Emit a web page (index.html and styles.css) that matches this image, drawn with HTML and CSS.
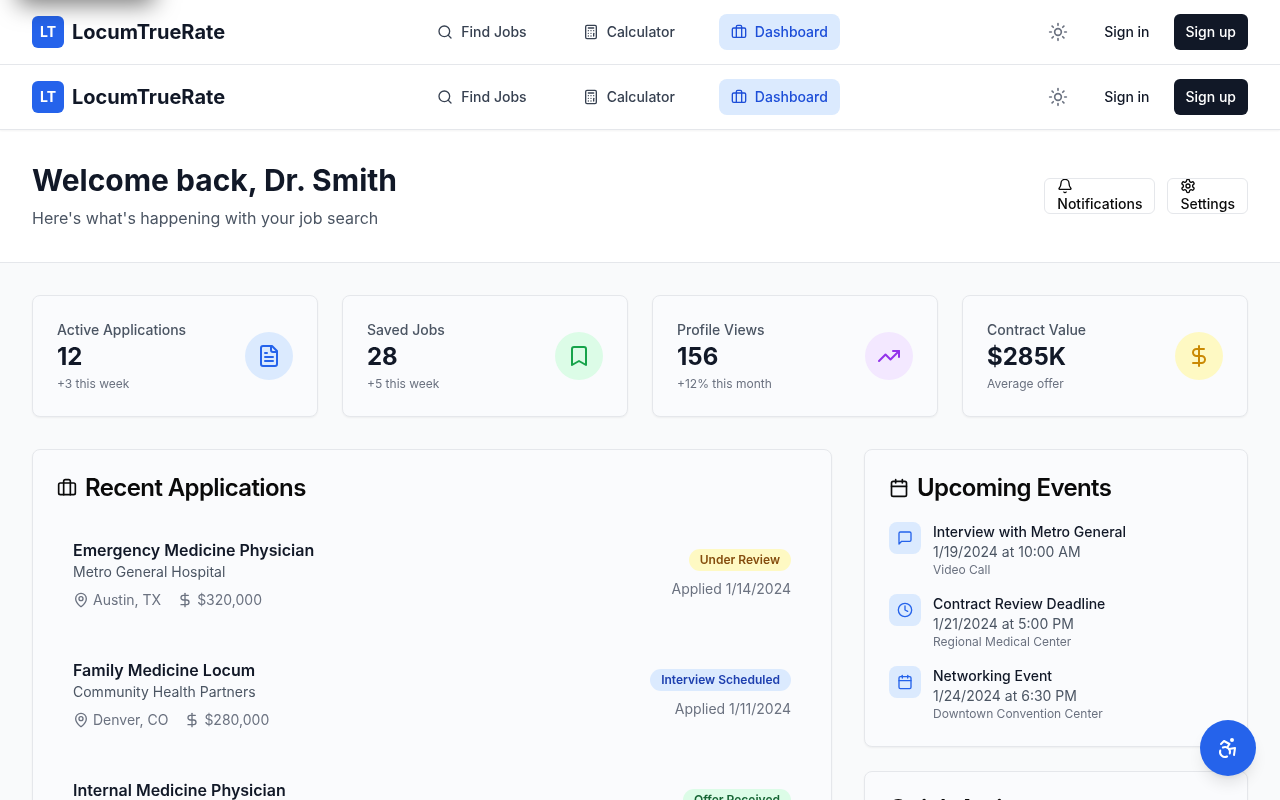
FILE: index.html
```html
<!DOCTYPE html>
<html lang="en">
<head>
<meta charset="utf-8">
<title>LocumTrueRate Dashboard</title>
<link rel="stylesheet" href="styles.css">
</head>
<body>
<svg class="sprite" width="0" height="0" aria-hidden="true">
  <defs>
    <symbol id="i-search" viewBox="0 0 24 24"><path d="m21 21-4.34-4.34"/><circle cx="11" cy="11" r="8"/></symbol>
    <symbol id="i-calc" viewBox="0 0 24 24"><rect width="16" height="20" x="4" y="2" rx="2"/><line x1="8" x2="16" y1="6" y2="6"/><line x1="16" x2="16" y1="14" y2="18"/><path d="M16 10h.01"/><path d="M12 10h.01"/><path d="M8 10h.01"/><path d="M12 14h.01"/><path d="M8 14h.01"/><path d="M12 18h.01"/><path d="M8 18h.01"/></symbol>
    <symbol id="i-brief" viewBox="0 0 24 24"><path d="M16 20V4a2 2 0 0 0-2-2h-4a2 2 0 0 0-2 2v16"/><rect width="20" height="14" x="2" y="6" rx="2"/></symbol>
    <symbol id="i-sun" viewBox="0 0 24 24"><circle cx="12" cy="12" r="4"/><path d="M12 2v2"/><path d="M12 20v2"/><path d="m4.93 4.93 1.41 1.41"/><path d="m17.66 17.66 1.41 1.41"/><path d="M2 12h2"/><path d="M20 12h2"/><path d="m6.34 17.66-1.41 1.41"/><path d="m19.07 4.93-1.41 1.41"/></symbol>
    <symbol id="i-bell" viewBox="0 0 24 24"><path d="M10.268 21a2 2 0 0 0 3.464 0"/><path d="M3.262 15.326A1 1 0 0 0 4 17h16a1 1 0 0 0 .74-1.673C19.41 13.956 18 12.499 18 8A6 6 0 0 0 6 8c0 4.499-1.411 5.956-2.738 7.326"/></symbol>
    <symbol id="i-gear" viewBox="0 0 24 24"><path d="M12.22 2h-.44a2 2 0 0 0-2 2v.18a2 2 0 0 1-1 1.73l-.43.25a2 2 0 0 1-2 0l-.15-.08a2 2 0 0 0-2.73.73l-.22.38a2 2 0 0 0 .73 2.73l.15.1a2 2 0 0 1 1 1.72v.51a2 2 0 0 1-1 1.74l-.15.09a2 2 0 0 0-.73 2.73l.22.38a2 2 0 0 0 2.73.73l.15-.08a2 2 0 0 1 2 0l.43.25a2 2 0 0 1 1 1.73V20a2 2 0 0 0 2 2h.44a2 2 0 0 0 2-2v-.18a2 2 0 0 1 1-1.73l.43-.25a2 2 0 0 1 2 0l.15.08a2 2 0 0 0 2.73-.73l.22-.39a2 2 0 0 0-.73-2.73l-.15-.08a2 2 0 0 1-1-1.74v-.5a2 2 0 0 1 1-1.74l.15-.09a2 2 0 0 0 .73-2.73l-.22-.38a2 2 0 0 0-2.73-.73l-.15.08a2 2 0 0 1-2 0l-.43-.25a2 2 0 0 1-1-1.73V4a2 2 0 0 0-2-2z"/><circle cx="12" cy="12" r="3"/></symbol>
    <symbol id="i-file" viewBox="0 0 24 24"><path d="M15 2H6a2 2 0 0 0-2 2v16a2 2 0 0 0 2 2h12a2 2 0 0 0 2-2V7Z"/><path d="M14 2v4a2 2 0 0 0 2 2h4"/><path d="M10 9H8"/><path d="M16 13H8"/><path d="M16 17H8"/></symbol>
    <symbol id="i-bookmark" viewBox="0 0 24 24"><path d="m19 21-7-4-7 4V5a2 2 0 0 1 2-2h10a2 2 0 0 1 2 2v16z"/></symbol>
    <symbol id="i-trend" viewBox="0 0 24 24"><path d="M16 7h6v6"/><path d="m22 7-8.5 8.5-5-5L2 17"/></symbol>
    <symbol id="i-dollar" viewBox="0 0 24 24"><line x1="12" x2="12" y1="2" y2="22"/><path d="M17 5H9.5a3.5 3.5 0 0 0 0 7h5a3.5 3.5 0 0 1 0 7H6"/></symbol>
    <symbol id="i-pin" viewBox="0 0 24 24"><path d="M20 10c0 4.993-5.539 10.193-7.399 11.799a1 1 0 0 1-1.202 0C9.539 20.193 4 14.993 4 10a8 8 0 0 1 16 0"/><circle cx="12" cy="10" r="3"/></symbol>
    <symbol id="i-cal" viewBox="0 0 24 24"><path d="M8 2v4"/><path d="M16 2v4"/><rect width="18" height="18" x="3" y="4" rx="2"/><path d="M3 10h18"/></symbol>
    <symbol id="i-chat" viewBox="0 0 24 24"><path d="M21 15a2 2 0 0 1-2 2H7l-4 4V5a2 2 0 0 1 2-2h14a2 2 0 0 1 2 2z"/></symbol>
    <symbol id="i-clock" viewBox="0 0 24 24"><circle cx="12" cy="12" r="10"/><polyline points="12 6 12 12 16 14"/></symbol>
    <symbol id="i-access" viewBox="0 0 24 24"><circle cx="16" cy="4" r="1"/><path d="m18 19 1-7-6 1"/><path d="m5 8 3-3 5.5 3-2.36 3.5"/><path d="M4.24 14.5a5 5 0 0 0 6.88 6"/><path d="M13.76 17.5a5 5 0 0 0-6.88-6"/></symbol>
  </defs>
</svg>

<div class="page">
<header class="nav">
  <a class="brand" href="#"><span class="brand-mark">LT</span><span class="brand-name">LocumTrueRate</span></a>
  <nav class="nav-links">
    <a class="nav-link" href="#"><svg class="ic ic-16"><use href="#i-search"/></svg>Find Jobs</a>
    <a class="nav-link" href="#"><svg class="ic ic-16"><use href="#i-calc"/></svg>Calculator</a>
    <a class="nav-link is-active" href="#"><svg class="ic ic-16"><use href="#i-brief"/></svg>Dashboard</a>
  </nav>
  <div class="nav-actions">
    <button class="theme-btn" type="button" aria-label="Toggle theme"><svg class="ic ic-20"><use href="#i-sun"/></svg></button>
    <a class="signin" href="#">Sign in</a>
    <a class="signup" href="#">Sign up</a>
  </div>
</header>

<header class="nav nav-second">
  <a class="brand" href="#"><span class="brand-mark">LT</span><span class="brand-name">LocumTrueRate</span></a>
  <nav class="nav-links">
    <a class="nav-link" href="#"><svg class="ic ic-16"><use href="#i-search"/></svg>Find Jobs</a>
    <a class="nav-link" href="#"><svg class="ic ic-16"><use href="#i-calc"/></svg>Calculator</a>
    <a class="nav-link is-active" href="#"><svg class="ic ic-16"><use href="#i-brief"/></svg>Dashboard</a>
  </nav>
  <div class="nav-actions">
    <button class="theme-btn" type="button" aria-label="Toggle theme"><svg class="ic ic-20"><use href="#i-sun"/></svg></button>
    <a class="signin" href="#">Sign in</a>
    <a class="signup" href="#">Sign up</a>
  </div>
</header>

<section class="hero">
  <div>
    <h1 class="hero-title">Welcome back, Dr. Smith</h1>
    <p class="hero-sub">Here's what's happening with your job search</p>
  </div>
  <div class="hero-actions">
    <button class="outline-btn" type="button"><svg class="ic ic-16"><use href="#i-bell"/></svg><span>Notifications</span></button>
    <button class="outline-btn" type="button"><svg class="ic ic-16"><use href="#i-gear"/></svg><span>Settings</span></button>
  </div>
</section>

<main class="main" id="main">
  <section class="stats">
    <article class="card stat">
      <div><p class="stat-label">Active Applications</p><p class="stat-value">12</p><p class="stat-note">+3 this week</p></div>
      <span class="stat-icon bg-blue"><svg class="ic ic-24"><use href="#i-file"/></svg></span>
    </article>
    <article class="card stat">
      <div><p class="stat-label">Saved Jobs</p><p class="stat-value">28</p><p class="stat-note">+5 this week</p></div>
      <span class="stat-icon bg-green"><svg class="ic ic-24"><use href="#i-bookmark"/></svg></span>
    </article>
    <article class="card stat">
      <div><p class="stat-label">Profile Views</p><p class="stat-value">156</p><p class="stat-note">+12% this month</p></div>
      <span class="stat-icon bg-purple"><svg class="ic ic-24"><use href="#i-trend"/></svg></span>
    </article>
    <article class="card stat">
      <div><p class="stat-label">Contract Value</p><p class="stat-value">$285K</p><p class="stat-note">Average offer</p></div>
      <span class="stat-icon bg-yellow"><svg class="ic ic-24"><use href="#i-dollar"/></svg></span>
    </article>
  </section>

  <div class="columns">
    <section class="card panel col-wide">
      <h2 class="panel-title"><svg class="ic ic-20"><use href="#i-brief"/></svg>Recent Applications</h2>
      <div class="apps">
        <article class="app">
          <div>
            <h3 class="app-title">Emergency Medicine Physician</h3>
            <p class="app-company">Metro General Hospital</p>
            <div class="app-meta"><span class="meta-item"><svg class="ic ic-16"><use href="#i-pin"/></svg>Austin, TX</span><span class="meta-item"><svg class="ic ic-16"><use href="#i-dollar"/></svg>$320,000</span></div>
          </div>
          <div class="app-side"><span class="badge badge-yellow">Under Review</span><p class="app-date">Applied 1/14/2024</p></div>
        </article>
        <article class="app">
          <div>
            <h3 class="app-title">Family Medicine Locum</h3>
            <p class="app-company">Community Health Partners</p>
            <div class="app-meta"><span class="meta-item"><svg class="ic ic-16"><use href="#i-pin"/></svg>Denver, CO</span><span class="meta-item"><svg class="ic ic-16"><use href="#i-dollar"/></svg>$280,000</span></div>
          </div>
          <div class="app-side"><span class="badge badge-blue">Interview Scheduled</span><p class="app-date">Applied 1/11/2024</p></div>
        </article>
        <article class="app app-last">
          <div class="app-last-main">
            <h3 class="app-title">Internal Medicine Physician</h3>
          </div>
          <div class="app-side app-side-top"><span class="badge badge-green">Offer Received</span></div>
        </article>
      </div>
    </section>

    <div class="side">
      <section class="card panel">
        <h2 class="panel-title"><svg class="ic ic-20"><use href="#i-cal"/></svg>Upcoming Events</h2>
        <div class="events">
          <article class="event">
            <span class="event-icon"><svg class="ic ic-16"><use href="#i-chat"/></svg></span>
            <div><p class="event-title">Interview with Metro General</p><p class="event-date">1/19/2024 at 10:00 AM</p><p class="event-place">Video Call</p></div>
          </article>
          <article class="event">
            <span class="event-icon"><svg class="ic ic-16"><use href="#i-clock"/></svg></span>
            <div><p class="event-title">Contract Review Deadline</p><p class="event-date">1/21/2024 at 5:00 PM</p><p class="event-place">Regional Medical Center</p></div>
          </article>
          <article class="event">
            <span class="event-icon"><svg class="ic ic-16"><use href="#i-cal"/></svg></span>
            <div><p class="event-title">Networking Event</p><p class="event-date">1/24/2024 at 6:30 PM</p><p class="event-place">Downtown Convention Center</p></div>
          </article>
        </div>
      </section>
      <section class="card panel">
        <h2 class="panel-title panel-title-quick">Quick Actions</h2>
      </section>
    </div>
  </div>
</main>
</div>

<div class="offscreen-shadow" aria-hidden="true"></div>
<button class="fab" type="button" aria-label="Accessibility options"><svg class="ic ic-24"><use href="#i-access"/></svg></button>
</body>
</html>
```

FILE: styles.css
```css
* { box-sizing: border-box; }
html, body { height: 100%; overflow: hidden; }
body { margin: 0; background: #f9fafb; color: #111827; font-family: Inter, "Liberation Sans", sans-serif; font-size: 16px; line-height: 24px; -webkit-font-smoothing: antialiased; -moz-osx-font-smoothing: grayscale; }
p, h1, h2, h3 { margin: 0; }
a { color: inherit; text-decoration: none; }
button { font: inherit; color: inherit; background: none; border: 0; padding: 0; }
.page { will-change: transform; }
.sprite { position: absolute; }
.ic { display: block; flex: none; fill: none; stroke: currentColor; stroke-width: 2; stroke-linecap: round; stroke-linejoin: round; }
.ic-16 { width: 16px; height: 16px; }
.ic-20 { width: 20px; height: 20px; }
.ic-24 { width: 24px; height: 24px; }

.offscreen-shadow { position: absolute; left: 16px; top: -40px; width: 140px; height: 36px; border-radius: 6px; background: #2563eb; box-shadow: 0 10px 25px -2px rgba(0,0,0,.55); }

.nav { height: 65px; display: flex; justify-content: space-between; align-items: center; padding: 0 32px; background: #fff; border-bottom: 1px solid #e5e7eb; }
.nav-second { box-shadow: 0 1px 2px rgba(0,0,0,.05); position: relative; }
.brand { display: flex; align-items: center; gap: 8px; }
.brand-mark { width: 32px; height: 32px; display: flex; align-items: center; justify-content: center; border-radius: 6px; background: #2563eb; color: #fff; font-size: 14px; font-weight: 700; line-height: 20px; }
.brand-name { font-size: 20px; line-height: 28px; font-weight: 700; color: #111827; }
.nav-links { display: flex; gap: 32px; }
.nav-link { height: 36px; display: flex; align-items: center; gap: 8px; padding: 0 12px; border-radius: 8px; font-size: 14px; line-height: 20px; font-weight: 500; color: #374151; }
.nav-link.is-active { background: #dbeafe; color: #1d4ed8; }
.nav-actions { display: flex; align-items: center; gap: 16px; }
.theme-btn { width: 36px; height: 36px; display: flex; align-items: center; justify-content: center; color: #6b7280; }
.signin { padding: 8px 12px; font-size: 14px; line-height: 20px; font-weight: 500; color: #111827; }
.signup { height: 36px; margin-left: -4px; display: flex; align-items: center; padding: 0 12px; border-radius: 6px; background: #111827; color: #fff; font-size: 14px; line-height: 20px; font-weight: 500; }

.hero { height: 133px; display: flex; justify-content: space-between; align-items: center; padding: 0 32px; background: #fff; border-bottom: 1px solid #e5e7eb; }
.hero-title { font-size: 30px; line-height: 36px; font-weight: 700; color: #111827; }
.hero-sub { margin-top: 8px; color: #4b5563; }
.hero-actions { display: flex; gap: 12px; }
.outline-btn { height: 36px; padding: 0 12px; overflow: hidden; border: 1px solid #e5e7eb; border-radius: 6px; background: #fff; font-size: 14px; line-height: 20px; font-weight: 500; color: #0a0a0a; text-align: left; }
.outline-btn span { display: block; }
.outline-btn .ic { margin-top: -1px; }

.main { padding: 32px; }
.card { background: #fafbfd; border: 1px solid #e5e7eb; border-radius: 8px; box-shadow: 0 1px 2px rgba(0,0,0,.05); }
.stats { display: grid; grid-template-columns: repeat(4, 1fr); gap: 24px; }
.stat { display: flex; align-items: center; justify-content: space-between; padding: 24px; }
.stat-label { font-size: 14px; line-height: 20px; font-weight: 500; color: #4b5563; }
.stat-value { margin-top: 1px; font-size: 24px; line-height: 32px; font-weight: 700; color: #111827; }
.stat-note { font-size: 12px; line-height: 16px; margin-top: 3px; color: #6b7280; }
.stat-icon { width: 48px; height: 48px; display: flex; align-items: center; justify-content: center; border-radius: 50%; }
.bg-blue { background: #dbeafe; color: #2563eb; }
.bg-green { background: #dcfce7; color: #16a34a; }
.bg-purple { background: #f3e8ff; color: #9333ea; }
.bg-yellow { background: #fef9c3; color: #ca8a04; }

.columns { display: grid; grid-template-columns: repeat(3, 1fr); gap: 32px; margin-top: 32px; align-items: start; }
.col-wide { grid-column: span 2; }
.side { display: flex; flex-direction: column; gap: 24px; }
.panel { padding: 24px; }
.panel-title { display: flex; align-items: center; gap: 8px; font-size: 24px; line-height: 28px; font-weight: 600; letter-spacing: -0.6px; color: #0a0a0a; }
.panel-title-quick { margin-top: -1px; }
.apps { display: flex; flex-direction: column; gap: 16px; margin-top: 20px; }
.app { display: flex; justify-content: space-between; align-items: center; padding: 16px; }
.app-title { font-size: 16px; line-height: 24px; font-weight: 600; color: #111827; }
.app-company { font-size: 14px; line-height: 20px; color: #4b5563; }
.app-meta { display: flex; gap: 16px; margin-top: 8px; font-size: 14px; line-height: 20px; color: #6b7280; }
.meta-item { display: flex; align-items: center; gap: 4px; }
.app-side { display: flex; flex-direction: column; align-items: flex-end; gap: 8px; }
.app-last { align-items: flex-start; min-height: 104px; }
.app-side-top { margin-top: 11px; }
.badge { height: 22px; display: flex; align-items: center; padding: 0 11px; border-radius: 999px; font-size: 12px; line-height: 16px; font-weight: 600; }
.badge-yellow { background: #fef9c3; color: #854d0e; }
.badge-blue { background: #dbeafe; color: #1e40af; }
.badge-green { background: #dcfce7; color: #166534; }
.app-date { font-size: 14px; line-height: 20px; color: #6b7280; }

.events { display: flex; flex-direction: column; gap: 16px; margin-top: 20px; }
.event { display: flex; gap: 12px; }
.event-icon { width: 32px; height: 32px; display: flex; align-items: center; justify-content: center; border-radius: 8px; background: #dbeafe; color: #2563eb; flex: none; }
.event-title { font-size: 14px; line-height: 20px; font-weight: 500; color: #111827; }
.event-date { font-size: 14px; line-height: 20px; color: #4b5563; }
.event-place { font-size: 12px; line-height: 16px; color: #6b7280; }

.fab { position: fixed; right: 24px; bottom: 24px; width: 56px; height: 56px; display: flex; align-items: center; justify-content: center; border-radius: 50%; background: #2563eb; color: #fff; box-shadow: 0 10px 15px -3px rgba(0,0,0,.1), 0 4px 6px -4px rgba(0,0,0,.1); }
```
